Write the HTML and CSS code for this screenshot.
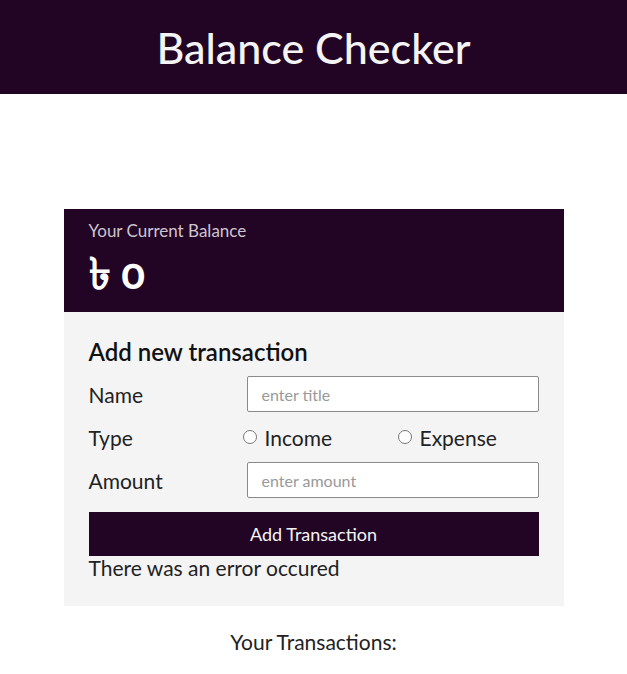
FILE: index.html
```html
<!DOCTYPE html>
<html lang="en">
<head>
  <meta charset="UTF-8" />
  <meta name="viewport" content="width=device-width, initial-scale=1.0" />
  <title>Balance Checker</title>
  <link rel="stylesheet" href="styles.css">
</head>
<body>
  <header>
    <h1>Balance Checker</h1>
  </header>

  <main class="container">
    <section class="balance">
      <p class="balance-label">Your Current Balance</p>
      <p class="balance-amount">৳ 0</p>
    </section>

    <section class="form-box">
      <h2>Add new transaction</h2>
      <div class="row">
        <label for="title">Name</label>
        <input type="text" id="title" placeholder="enter title">
      </div>
      <div class="row">
        <label>Type</label>
        <div class="radios">
          <label class="radio"><input type="radio" name="type" value="income"> Income</label>
          <label class="radio"><input type="radio" name="type" value="expense"> Expense</label>
        </div>
      </div>
      <div class="row">
        <label for="amount">Amount</label>
        <input type="text" id="amount" placeholder="enter amount">
      </div>
      <button>Add Transaction</button>
      <p class="error">There was an error occured</p>
    </section>

    <h3 class="list-title">Your Transactions:</h3>
    <ul id="transactionList"></ul>
  </main>
</body>
</html>
```

FILE: styles.css
```css
* {
  box-sizing: border-box;
  margin: 0;
  padding: 0;
  font-family: Lato, "Open Sans", sans-serif;
}

body {
  background-color: #fff;
  color: #222;
}

header {
  background-color: #220524;
  height: 94px;
  display: flex;
  align-items: center;
  justify-content: center;
}

header h1 {
  color: #f4f4f4;
  font-size: 43px;
  font-weight: 500;
}

.container {
  width: 500px;
  margin: 115px auto 0;
}

.balance {
  background-color: #220524;
  color: #fff;
  padding: 12px 25px 14px;
  height: 103px;
}

.balance-label {
  font-size: 17px;
  color: #cfc4d0;
  line-height: 20px;
}

.balance-amount {
  font-size: 44px;
  font-weight: 700;
  line-height: 62px;
  font-variant-numeric: oldstyle-nums;
}

.form-box {
  background-color: #f4f4f4;
  padding: 26px 25px 26px;
}

.form-box h2 {
  font-size: 24px;
  font-weight: 600;
  color: #111;
  line-height: 28px;
  margin-bottom: 10px;
}

.row {
  display: grid;
  grid-template-columns: 158px 1fr;
  align-items: center;
  margin-bottom: 7px;
}

.row > label {
  font-size: 21px;
  color: #222;
}

input[type="text"] {
  height: 36px;
  padding: 0 14px;
  border: 1px solid #8a8a8a;
  border-radius: 2px;
  font-size: 16px;
  background: #fff;
}

input[type="text"]::placeholder {
  color: #999;
}

.radios {
  display: flex;
  height: 36px;
  align-items: center;
  margin-left: -4px;
}

.radio {
  font-size: 21px;
  width: 155px;
  display: flex;
  align-items: center;
  gap: 8px;
}

.radio input {
  width: 14px;
  height: 14px;
  margin: 0;
}

button {
  display: block;
  width: 100%;
  height: 44px;
  margin-top: 14px;
  border: none;
  background-color: #220524;
  color: #f4f4f4;
  font-size: 18px;
  cursor: pointer;
}

.error {
  font-size: 21px;
  line-height: 24px;
}

.list-title {
  text-align: center;
  font-size: 21px;
  font-weight: 400;
  margin-top: 23px;
}

ul {
  list-style: none;
}
```
